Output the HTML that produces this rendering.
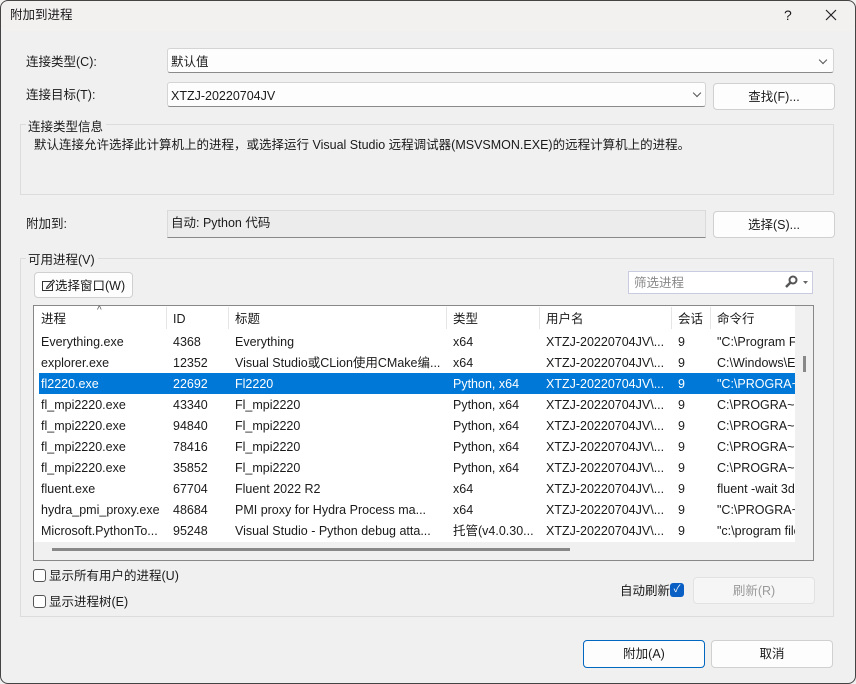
<!DOCTYPE html>
<html><head><meta charset="utf-8"><style>
*{margin:0;padding:0;box-sizing:border-box}
body{width:856px;height:684px;background:#f0f0f0;font-family:"Liberation Sans","Noto Sans CJK SC",sans-serif;font-size:12.5px;line-height:19px;color:#1a1a1a;position:relative;overflow:hidden}
.a{position:absolute;white-space:nowrap;line-height:19px}
.t{position:relative;top:2px}
.box{position:absolute;background:#fdfdfd;border:1px solid #d4d4d4;border-radius:3px;border-bottom-color:#8a8a8a}
.btn{position:absolute;background:#fdfdfd;border:1px solid #d0d0d0;border-radius:4px;text-align:center}
.grp{position:absolute;border:1px solid #dcdcdc}
.chev{position:absolute;width:6px;height:6px;border-right:1px solid #555;border-bottom:1px solid #555;transform:rotate(45deg)}
.row{position:absolute;left:39px;width:756px;height:21px}
.row span{position:absolute;top:2px;white-space:nowrap;overflow:hidden;line-height:19px;height:19px}
.cb{position:absolute;width:13px;height:13px;border:1px solid #555;border-radius:3px;background:#fff}
</style></head><body>
<div class="a" style="left:0;top:0;width:856px;height:31px;background:#f3f0f0"></div>
<div class="a" style="left:0;top:0;width:856px;height:684px;border:1px solid #444;border-radius:8px"></div>
<div class="a" style="left:10px;top:6px">附加到进程</div>
<div class="a" style="left:784px;top:6px;font-size:14px">?</div>
<svg class="a" style="left:825px;top:9px" width="12" height="12"><path d="M1 1L11 11M11 1L1 11" stroke="#222" stroke-width="1.2"/></svg>

<div class="a" style="left:26px;top:53px">连接类型(C):</div>
<div class="box" style="left:167px;top:48px;width:667px;height:25px"></div>
<div class="a" style="left:171px;top:53px">默认值</div>
<div class="chev" style="left:820px;top:57px"></div>

<div class="a" style="left:26px;top:86px">连接目标(T):</div>
<div class="box" style="left:167px;top:82px;width:539px;height:25px"></div>
<div class="a" style="left:171px;top:87px">XTZJ-20220704JV</div>
<div class="chev" style="left:694px;top:90px"></div>
<div class="btn" style="left:713px;top:83px;width:122px;height:27px;line-height:26px">查找(F)...</div>

<div class="grp" style="left:20px;top:124px;width:814px;height:71px"></div>
<div class="a" style="left:26px;top:117px;background:#f0f0f0;padding:0 3px 0 2px;line-height:16px;height:17px"><span class="t">连接类型信息</span></div>
<div class="a" style="left:34px;top:136px">默认连接允许选择此计算机上的进程，或选择运行 Visual Studio 远程调试器(MSVSMON.EXE)的远程计算机上的进程。</div>

<div class="a" style="left:26px;top:215px">附加到:</div>
<div class="a" style="left:167px;top:210px;width:539px;height:28px;background:#ececec;border:1px solid #dadada;border-bottom-color:#888"></div>
<div class="a" style="left:171px;top:214px">自动: Python 代码</div>
<div class="btn" style="left:713px;top:211px;width:122px;height:27px;line-height:26px">选择(S)...</div>

<div class="grp" style="left:20px;top:258px;width:814px;height:359px"></div>
<div class="a" style="left:26px;top:251px;background:#f0f0f0;padding:0 3px 0 2px;line-height:14px;height:14px"><span class="t">可用进程(V)</span></div>
<div class="btn" style="left:34px;top:272px;width:99px;height:26px;line-height:26px;text-align:left;padding-left:6px"><svg width="14" height="14" style="vertical-align:-2px"><rect x="1.5" y="3.5" width="10" height="9" fill="none" stroke="#333"/><path d="M6 9 L12 2 L13.5 3.5 L7.5 10 L5.5 10.5Z" fill="#fff" stroke="#333"/></svg>选择窗口(W)</div>
<div class="a" style="left:628px;top:271px;width:185px;height:23px;background:#fff;border:1px solid #c9cce0"></div>
<div class="a" style="left:634px;top:274px;color:#888">筛选进程</div>
<svg class="a" style="left:784px;top:275px" width="28" height="14"><circle cx="9" cy="5" r="3.5" fill="none" stroke="#555" stroke-width="2"/><path d="M6.5 7.5 L2 12" stroke="#555" stroke-width="2.5"/><path d="M19 6 L24 6 L21.5 9Z" fill="#666"/></svg>

<div class="a" style="left:33px;top:305px;width:781px;height:256px;border:1px solid #888;background:#f0f0f0"></div>
<div class="a" style="left:34px;top:306px;width:761px;height:236px;background:#fff"></div>
<div class="a" style="left:796px;top:306px;width:17px;height:236px;background:#f0f0f0"></div>
<div class="a" style="left:803px;top:356px;width:3px;height:16px;background:#888"></div>
<div class="a" style="left:52px;top:548px;width:518px;height:3px;background:#888"></div>
<div class="a" style="left:97px;top:301px;font-size:10px;color:#555">^</div>
<span class="a" style="left:41px;top:310px">进程</span><span class="a" style="left:173px;top:310px">ID</span><span class="a" style="left:235px;top:310px">标题</span><span class="a" style="left:453px;top:310px">类型</span><span class="a" style="left:546px;top:310px">用户名</span><span class="a" style="left:678px;top:310px">会话</span><span class="a" style="left:717px;top:310px">命令行</span>
<div class="a" style="left:166px;top:307px;width:1px;height:22px;background:#e5e5e5"></div>
<div class="a" style="left:228px;top:307px;width:1px;height:22px;background:#e5e5e5"></div>
<div class="a" style="left:446px;top:307px;width:1px;height:22px;background:#e5e5e5"></div>
<div class="a" style="left:539px;top:307px;width:1px;height:22px;background:#e5e5e5"></div>
<div class="a" style="left:671px;top:307px;width:1px;height:22px;background:#e5e5e5"></div>
<div class="a" style="left:710px;top:307px;width:1px;height:22px;background:#e5e5e5"></div>

<div class="row" style="top:331px"><span style="left:2px">Everything.exe</span><span style="left:134px">4368</span><span style="left:196px">Everything</span><span style="left:414px">x64</span><span style="left:507px">XTZJ-20220704JV\...</span><span style="left:639px">9</span><span style="left:678px;width:78px">"C:\Program Files</span></div>
<div class="row" style="top:352px"><span style="left:2px">explorer.exe</span><span style="left:134px">12352</span><span style="left:196px">Visual Studio或CLion使用CMake编...</span><span style="left:414px">x64</span><span style="left:507px">XTZJ-20220704JV\...</span><span style="left:639px">9</span><span style="left:678px;width:78px">C:\Windows\Explorer</span></div>
<div class="row" style="top:373px;background:#0078d7;color:#fff"><span style="left:2px">fl2220.exe</span><span style="left:134px">22692</span><span style="left:196px">Fl2220</span><span style="left:414px">Python, x64</span><span style="left:507px">XTZJ-20220704JV\...</span><span style="left:639px">9</span><span style="left:678px;width:78px">"C:\PROGRA~1\</span></div>
<div class="row" style="top:394px"><span style="left:2px">fl_mpi2220.exe</span><span style="left:134px">43340</span><span style="left:196px">Fl_mpi2220</span><span style="left:414px">Python, x64</span><span style="left:507px">XTZJ-20220704JV\...</span><span style="left:639px">9</span><span style="left:678px;width:78px">C:\PROGRA~1\</span></div>
<div class="row" style="top:415px"><span style="left:2px">fl_mpi2220.exe</span><span style="left:134px">94840</span><span style="left:196px">Fl_mpi2220</span><span style="left:414px">Python, x64</span><span style="left:507px">XTZJ-20220704JV\...</span><span style="left:639px">9</span><span style="left:678px;width:78px">C:\PROGRA~1\</span></div>
<div class="row" style="top:436px"><span style="left:2px">fl_mpi2220.exe</span><span style="left:134px">78416</span><span style="left:196px">Fl_mpi2220</span><span style="left:414px">Python, x64</span><span style="left:507px">XTZJ-20220704JV\...</span><span style="left:639px">9</span><span style="left:678px;width:78px">C:\PROGRA~1\</span></div>
<div class="row" style="top:457px"><span style="left:2px">fl_mpi2220.exe</span><span style="left:134px">35852</span><span style="left:196px">Fl_mpi2220</span><span style="left:414px">Python, x64</span><span style="left:507px">XTZJ-20220704JV\...</span><span style="left:639px">9</span><span style="left:678px;width:78px">C:\PROGRA~1\</span></div>
<div class="row" style="top:478px"><span style="left:2px">fluent.exe</span><span style="left:134px">67704</span><span style="left:196px">Fluent 2022 R2</span><span style="left:414px">x64</span><span style="left:507px">XTZJ-20220704JV\...</span><span style="left:639px">9</span><span style="left:678px;width:78px">fluent -wait 3d</span></div>
<div class="row" style="top:499px"><span style="left:2px">hydra_pmi_proxy.exe</span><span style="left:134px">48684</span><span style="left:196px">PMI proxy for Hydra Process ma...</span><span style="left:414px">x64</span><span style="left:507px">XTZJ-20220704JV\...</span><span style="left:639px">9</span><span style="left:678px;width:78px">"C:\PROGRA~1\</span></div>
<div class="row" style="top:520px"><span style="left:2px">Microsoft.PythonTo...</span><span style="left:134px">95248</span><span style="left:196px">Visual Studio - Python debug atta...</span><span style="left:414px">托管(v4.0.30...</span><span style="left:507px">XTZJ-20220704JV\...</span><span style="left:639px">9</span><span style="left:678px;width:78px">"c:\program files</span></div>

<div class="cb" style="left:33px;top:569px"></div><div class="a" style="left:49px;top:567px">显示所有用户的进程(U)</div>
<div class="cb" style="left:33px;top:595px"></div><div class="a" style="left:49px;top:593px">显示进程树(E)</div>
<div class="a" style="left:620px;top:582px">自动刷新</div>
<div class="a" style="left:670px;top:583px;width:14px;height:14px;background:#0a5fc4;border-radius:3px;color:#fff;font-size:10px;text-align:center;line-height:14px">✓</div>
<div class="a" style="left:693px;top:577px;width:122px;height:27px;background:#f6f6f6;border:1px solid #e2e2e2;border-radius:4px;color:#999;text-align:center;line-height:26px">刷新(R)</div>

<div class="btn" style="left:583px;top:640px;width:122px;height:28px;line-height:27px;border-color:#0067c0">附加(A)</div>
<div class="btn" style="left:711px;top:640px;width:122px;height:28px;line-height:27px">取消</div>
</body></html>
